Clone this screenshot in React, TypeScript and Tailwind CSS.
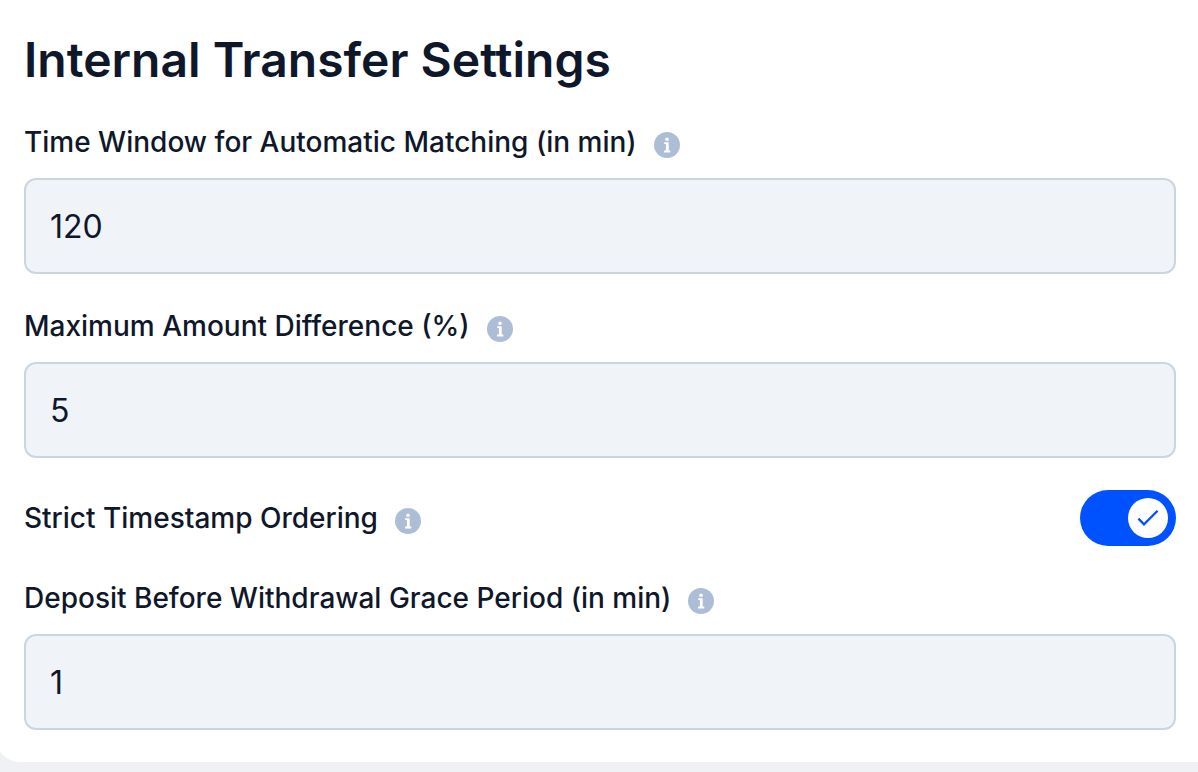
import React, { useState } from 'react';

function InfoIcon() {
  return (
    <svg width="26" height="26" viewBox="0 0 26 26" aria-hidden="true">
      <circle cx="13" cy="13" r="13" fill="currentColor" />
      <circle cx="13" cy="7.2" r="1.8" fill="white" />
      <path d="M10.2 10.2h4.5v8.3h1.6v2h-6.2v-2h1.8v-6.4h-1.7z" fill="white" />
    </svg>
  );
}

interface FieldLabelProps {
  htmlFor: string;
  text: string;
}

function FieldLabel({ htmlFor, text }: FieldLabelProps) {
  return (
    <div className="flex items-center gap-[17px]">
      <label htmlFor={htmlFor} className="text-[28px] leading-10 font-medium">
        {text}
      </label>
      <button type="button" aria-label={`About ${text}`} className="mt-1.5 text-[#aebdd6]">
        <InfoIcon />
      </button>
    </div>
  );
}

interface NumberFieldProps {
  id: string;
  label: string;
  value: string;
  onChange: (value: string) => void;
}

function NumberField({ id, label, value, onChange }: NumberFieldProps) {
  return (
    <div className="flex flex-col gap-4">
      <FieldLabel htmlFor={id} text={label} />
      <input
        id={id}
        type="text"
        inputMode="numeric"
        value={value}
        onChange={(e) => onChange(e.target.value)}
        className="h-24 w-full rounded-xl border-2 border-[#c9d5e1] bg-[#f0f4f9] px-6 text-[32px] outline-none focus:border-[#0052ff]"
      />
    </div>
  );
}

interface ToggleProps {
  id: string;
  checked: boolean;
  onChange: (checked: boolean) => void;
}

function Toggle({ id, checked, onChange }: ToggleProps) {
  return (
    <div className="relative h-14 w-24 shrink-0">
      <input
        id={id}
        type="checkbox"
        checked={checked}
        onChange={(e) => onChange(e.target.checked)}
        className="peer block h-full w-full cursor-pointer appearance-none rounded-full bg-[#c9d5e1] checked:bg-[#0052ff]"
      />
      {/* Knob */}
      <span className="pointer-events-none absolute top-2 left-2 flex size-10 items-center justify-center rounded-full bg-white transition-transform peer-checked:translate-x-10">
        {checked && (
          <svg width="24" height="24" viewBox="0 0 24 24" fill="none" stroke="#0052ff" strokeWidth="2.3">
            <path d="M2.4 12.6 8 18.3 21.6 4.8" />
          </svg>
        )}
      </span>
    </div>
  );
}

export default function App() {
  const [timeWindow, setTimeWindow] = useState('120');
  const [maxDifference, setMaxDifference] = useState('5');
  const [strictOrdering, setStrictOrdering] = useState(true);
  const [gracePeriod, setGracePeriod] = useState('1');

  return (
    <main className="min-h-screen overflow-hidden bg-[#eff1f5] font-['Inter',sans-serif] text-[#0f172a]">
      <section className="-mr-6 -ml-1 flex flex-col gap-8 rounded-b-3xl bg-white pt-[30px] pr-[46px] pb-8 pl-7">
        <h1 className="text-5xl leading-[60px] font-semibold">Internal Transfer Settings</h1>

        <NumberField
          id="time-window"
          label="Time Window for Automatic Matching (in min)"
          value={timeWindow}
          onChange={setTimeWindow}
        />
        <NumberField
          id="max-difference"
          label="Maximum Amount Difference (%)"
          value={maxDifference}
          onChange={setMaxDifference}
        />

        <div className="flex items-center justify-between">
          <FieldLabel htmlFor="strict-ordering" text="Strict Timestamp Ordering" />
          <Toggle id="strict-ordering" checked={strictOrdering} onChange={setStrictOrdering} />
        </div>

        <NumberField
          id="grace-period"
          label="Deposit Before Withdrawal Grace Period (in min)"
          value={gracePeriod}
          onChange={setGracePeriod}
        />
      </section>
    </main>
  );
}
